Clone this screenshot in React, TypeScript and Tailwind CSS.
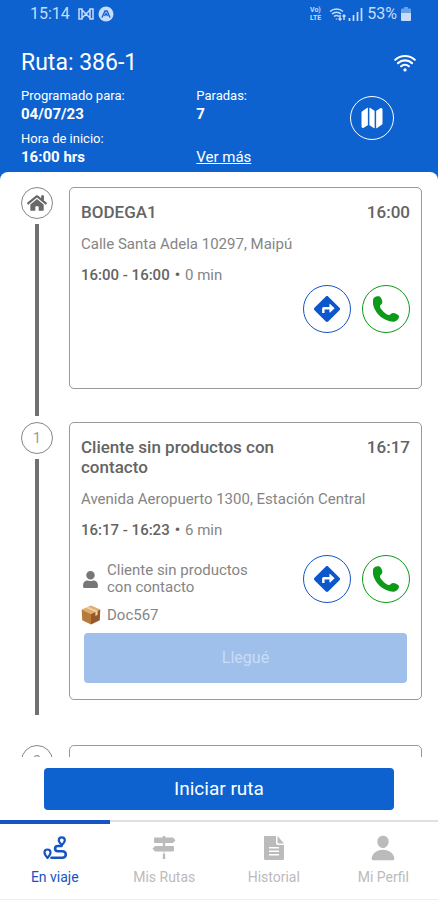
import type { ReactNode } from "react";
import { FaDirections, FaHome, FaUser } from "react-icons/fa";
import { IoMap, IoPerson, IoWifi } from "react-icons/io5";

interface Stop {
  id: string;
  marker: ReactNode;
  name: string;
  arrival: string;
  address: string;
  range: string;
  duration: string;
  contact?: string;
  document?: string;
  spacing: string;
  lineSpacing: string;
}

const stops: Stop[] = [
  {
    id: "bodega",
    marker: <FaHome className="size-5 text-[#686868]" />,
    name: "BODEGA1",
    arrival: "16:00",
    address: "Calle Santa Adela 10297, Maipú",
    range: "16:00 - 16:00",
    duration: "0 min",
    spacing: "pb-[33px]",
    lineSpacing: "mb-[6px]",
  },
  {
    id: "cliente",
    marker: "1",
    name: "Cliente sin productos con contacto",
    arrival: "16:17",
    address: "Avenida Aeropuerto 1300, Estación Central",
    range: "16:17 - 16:23",
    duration: "6 min",
    contact: "Cliente sin productos con contacto",
    document: "Doc567",
    spacing: "pb-[45px]",
    lineSpacing: "mb-[30px]",
  },
  {
    id: "siguiente",
    marker: "2",
    name: "",
    arrival: "",
    address: "",
    range: "",
    duration: "",
    spacing: "pb-[33px]",
    lineSpacing: "mb-[6px]",
  },
];

const RouteIcon = () => (
  <svg viewBox="0 0 24 24" className="size-6" fill="none" stroke="currentColor">
    <path
      d="M4.500 22C2.500 19.600 1.500 18.200 1.500 16.500a3 3 0 0 1 6 0c0 1.700-1 3.100-3 5.500z"
      strokeWidth="2.200"
      strokeLinejoin="round"
    />
    <path
      d="M18.800 9c-2-2-3-3.200-3-4.600a3 3 0 0 1 6 0c0 1.400-1 2.600-3 4.600z"
      strokeWidth="2.200"
      strokeLinejoin="round"
    />
    <path
      d="M18.500 10h-3.800a2.500 2.500 0 0 0 0 5.200h4.800a3.100 3.100 0 0 1 0 6.600H8.500"
      strokeWidth="2.600"
      strokeLinecap="round"
    />
  </svg>
);

const SignsIcon = () => (
  <svg viewBox="0 0 24 24" className="size-6" fill="currentColor">
    <path d="M10.800 0h2.400v2h-2.400zM10.800 7h2.400v3h-2.400zM10.800 18h2.400v5h-2.400z" />
    <path d="M3 1.500h18l2.500 2.800-2.500 2.800H3q-1 0-1-1V2.500q0-1 1-1z" />
    <path d="M21 10H3L.5 12.800 3 15.600h18q1 0 1-1V11q0-1-1-1z" />
    <path d="M10.800 15.600h2.400V18h-2.400z" opacity=".4" />
  </svg>
);

const DocumentIcon = () => (
  <svg viewBox="0 0 24 24" className="size-6" fill="currentColor">
    <path
      fillRule="evenodd"
      d="M2 0h12v7q0 2 2 2h6v13.500q0 1.500-1.500 1.500H3.500Q2 24 2 22.500zM7 11v1.600h10V11zM7 14.500v1.600h10v-1.600zM7 18v1.600h10V18z"
    />
    <path d="M15.500 0 22 7.500h-5q-1.500 0-1.500-1.500z" />
  </svg>
);

const PhoneIcon = () => (
  <svg viewBox="0 0 75 75" className="size-[26px]" fill="currentColor">
    <path d="M3 5C8 1 14 0 18 1c5 2 9 11 9 17 0 6-7 7-7 12 1 8 18 24 26 25 5 0 6-6 12-6 6 0 15 5 17 9 1 6-6 15-14 16-14 1-33-7-44-19C6 44-3 26 0 12c0-3 1-5 3-7z" />
  </svg>
);

const PackageIcon = () => (
  <svg viewBox="0 0 20 20" className="size-5 shrink-0">
    <path d="M10 0.500 19.300 4.500 10 9 0.700 4.500z" fill="#e0ad6c" />
    <path d="M0.700 4.500 10 9v10.500L1.200 15.200z" fill="#b87b3b" />
    <path d="M19.300 4.500 10 9v10.500l8.800-4.300z" fill="#96592b" />
    <path d="m5 2.700 9.400 4.200v4.200l2.200-1.300V5.900L7.200 1.700z" fill="#f1d3a4" />
  </svg>
);

const StatusBar = () => (
  <div className="flex h-7 items-center justify-between pl-[30px] pr-[27px] text-base text-[#c6dcfa]">
    <div className="flex items-center gap-2">
      <span>15:14</span>
      <div className="flex items-center gap-1">
        <svg
          viewBox="0 0 16 12"
          className="h-3 w-4"
          fill="none"
          stroke="currentColor"
          strokeWidth="1.500"
        >
          <path d="M1 1v10h3V1zM12 1v10h3V1zM4 2l4 4 4-4M4 10l4-4 4 4" />
        </svg>
        <svg viewBox="0 0 16 16" className="size-4">
          <circle cx="8" cy="8" r="7.500" fill="currentColor" />
          <path
            d="M4 11.500 7 5h2l3 6.500M6.500 10 8 7.500 9.500 10"
            fill="none"
            stroke="#0d62d0"
            strokeWidth="1.400"
          />
        </svg>
      </div>
    </div>
    <div className="flex items-center gap-1">
      <span className="flex flex-col text-[7px] font-bold leading-[8px]">
        <span>Vo)</span>
        <span>LTE</span>
      </span>
      <svg
        viewBox="0 0 34 14"
        className="ml-1 h-[14px] w-[34px]"
        fill="none"
        stroke="currentColor"
        strokeWidth="1.500"
      >
        <path d="M1 4.500a9.500 9.500 0 0 1 13 0M3 7a6.500 6.500 0 0 1 9 0M5 9.500a4 4 0 0 1 5 0" />
        <path d="M7.500 11.500v1M11 8v5M9.500 11.500 11 13l1.500-1.500M15 13V8M13.500 9.500 15 8l1.500 1.500" />
        <path d="M20.500 14v-3M24.500 14V8M28.500 14V5M32.500 14V1" strokeWidth="1.700" />
      </svg>
      <span>53%</span>
      <svg viewBox="0 0 10 14" className="h-[14px] w-[10px]" fill="currentColor">
        <path d="M3 0h4v1.500h2q1 0 1 1V6H0V2.500q0-1 1-1h2z" opacity=".5" />
        <path d="M0 6h10v7q0 1-1 1H1q-1 0-1-1z" />
      </svg>
    </div>
  </div>
);

const RouteHeader = () => (
  <header className="bg-[#0d62d0] pb-[5px] text-white">
    <StatusBar />

    <div className="flex items-center justify-between pl-[21px] pr-5 pt-[21px]">
      <h1 className="text-[23px] leading-7">Ruta: 386-1</h1>
      <IoWifi className="size-[26px]" aria-label="Conectado" />
    </div>

    <div className="flex items-start pl-[21px] pr-11 pt-[11px]">
      <dl className="w-[47%] text-[13px] leading-4">
        <dt>Programado para:</dt>
        <dd className="text-[15px] font-bold leading-5">04/07/23</dd>
        <dt className="pt-[7px]">Hora de inicio:</dt>
        <dd className="text-[15px] font-bold leading-5">16:00 hrs</dd>
      </dl>
      <div className="flex flex-1 flex-col self-stretch">
        <dl className="text-[13px] leading-4">
          <dt>Paradas:</dt>
          <dd className="text-[15px] font-bold leading-5">7</dd>
        </dl>
        <a href="#detalle" className="mt-auto text-[15px] leading-5 underline">
          Ver más
        </a>
      </div>
      <button
        type="button"
        aria-label="Ver mapa"
        className="mt-2 flex size-11 items-center justify-center rounded-full border border-white"
      >
        <IoMap className="size-6" />
      </button>
    </div>
  </header>
);

const StopActions = () => (
  <div className="flex shrink-0 justify-end gap-[11px]">
    <button
      type="button"
      aria-label="Cómo llegar"
      className="flex size-12 items-center justify-center rounded-full border border-[#1554c4] text-[#0d57cc]"
    >
      <FaDirections className="size-[26px]" />
    </button>
    <button
      type="button"
      aria-label="Llamar"
      className="flex size-12 items-center justify-center rounded-full border border-[#0c9a18] text-[#0c9a18]"
    >
      <PhoneIcon />
    </button>
  </div>
);

const StopItem = ({ stop }: { stop: Stop }) => (
  <li className="flex gap-4">
    <div className="flex w-8 shrink-0 flex-col items-center">
      <div className="flex size-8 shrink-0 items-center justify-center rounded-full border border-[#858585] text-sm text-[#999]">
        {stop.marker}
      </div>
      <div className={`mt-[5px] w-1 flex-1 bg-[#717171] ${stop.lineSpacing}`} />
    </div>

    <div className={`min-w-0 flex-1 ${stop.spacing}`}>
      <article className="min-h-[202px] rounded-[5px] border border-[#999] px-[11px] pb-4 pt-[14px] text-[15px] text-[#858585]">
        <div className="flex items-start justify-between text-[17px] font-medium leading-5 text-[#646464]">
          <h2 className="w-[210px]">{stop.name}</h2>
          <span>{stop.arrival}</span>
        </div>
        <p className="pt-3 leading-5">{stop.address}</p>
        {stop.range && (
          <p className="flex gap-[5px] pt-[11px] leading-5">
            <span className="font-medium text-[#646464]">{stop.range}</span>
            <span className="font-bold text-[#646464]">•</span>
            <span>{stop.duration}</span>
          </p>
        )}

        {stop.contact ? (
          <>
            <div className="flex items-center justify-between pt-[15px]">
              <div className="flex items-center gap-2">
                <FaUser className="ml-px size-[17px] shrink-0 text-[#777]" />
                <p className="w-[160px] leading-[17px]">{stop.contact}</p>
              </div>
              <StopActions />
            </div>
            <div className="flex items-center gap-[6px] pt-[2px] leading-5">
              <PackageIcon />
              <span>{stop.document}</span>
            </div>
            <div className="px-[3px] pt-2">
              <button
                type="button"
                disabled
                className="h-[50px] w-full rounded-[4px] bg-[#9fc0eb] text-base text-[#c9dcf5]"
              >
                Llegué
              </button>
            </div>
          </>
        ) : (
          <StopActions />
        )}
      </article>
    </div>
  </li>
);

const tabs = [
  { label: "En viaje", icon: <RouteIcon />, active: true },
  { label: "Mis Rutas", icon: <SignsIcon />, active: false },
  { label: "Historial", icon: <DocumentIcon />, active: false },
  { label: "Mi Perfil", icon: <IoPerson className="size-7" />, active: false },
];

const TabBar = () => (
  <nav className="grid grid-cols-4 border-b border-[#eee]">
    {tabs.map((tab) => (
      <a
        key={tab.label}
        href="#"
        aria-current={tab.active ? "page" : undefined}
        className={`flex flex-col items-center pb-3 text-sm ${
          tab.active ? "text-[#1554c4]" : "text-[#bbb]"
        }`}
      >
        <span
          className={`w-full ${
            tab.active ? "h-1 bg-[#1554c4]" : "mb-[2px] h-[2px] bg-[#e0e0e0]"
          }`}
        />
        <span className="flex h-10 items-center pt-2">{tab.icon}</span>
        <span className="pt-[3px]">{tab.label}</span>
      </a>
    ))}
  </nav>
);

const App = () => {
  return (
    <div className="flex h-screen flex-col bg-[#0d62d0] font-['Roboto',sans-serif]">
      <RouteHeader />

      <main className="min-h-0 flex-1 overflow-y-auto rounded-t-lg bg-white pl-[21px] pr-4 pt-[15px] [scrollbar-width:none]">
        <ol>
          {stops.map((stop) => (
            <StopItem key={stop.id} stop={stop} />
          ))}
        </ol>
      </main>

      <footer className="bg-white">
        <div className="px-11 pb-[10px] pt-[11px]">
          <button
            type="button"
            className="h-[42px] w-full rounded-[4px] bg-[#0d62d0] text-[19px] text-white"
          >
            Iniciar ruta
          </button>
        </div>
        <TabBar />
      </footer>
    </div>
  );
};

export default App;
